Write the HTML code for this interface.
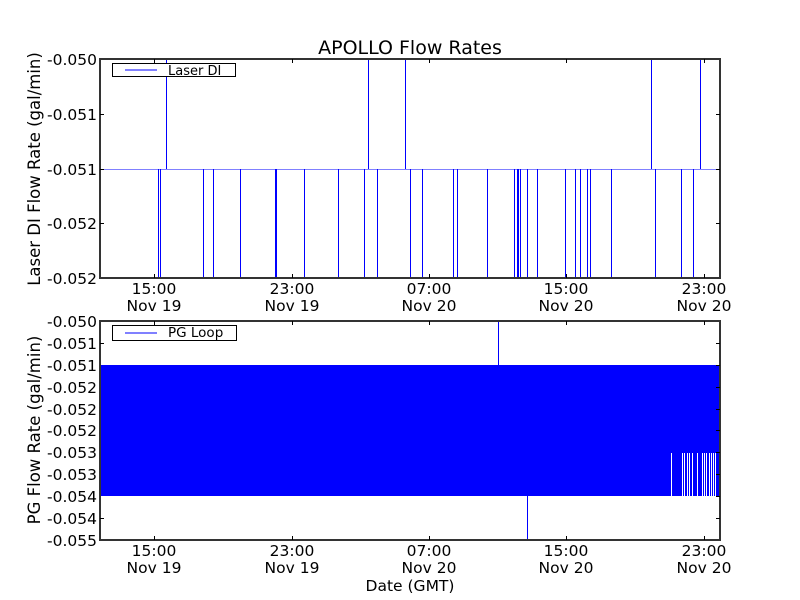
<!DOCTYPE html>
<html><head><style>body{margin:0;background:#fff}svg{display:block}text{font-family:"DejaVu Sans","Liberation Sans",sans-serif;font-size:15.5px;fill:#000}</style></head><body>
<svg width="800" height="600" viewBox="0 0 800 600" xmlns="http://www.w3.org/2000/svg">
<rect width="800" height="600" fill="#fff"/>
<text x="410" y="54" text-anchor="middle" style="font-size:19px">APOLLO Flow Rates</text>
<g stroke="#0000ff" stroke-width="1" fill="none">
<line x1="100" y1="169.5" x2="720" y2="169.5" stroke="#8080ff"/>
<path d="M158.5 169V278M160.5 169V278M203.5 169V278M213.5 169V278M240.5 169V278M275.5 169V278M276.5 169V278M304.5 169V278M338.5 169V278M364.5 169V278M377.5 169V278M410.5 169V278M422.5 169V278M453.5 169V278M457.5 169V278M487.5 169V278M514.5 169V278M517.5 169V278M518.5 169V278M520.5 169V278M527.5 169V278M537.5 169V278M565.5 169V278M575.5 169V278M580.5 169V278M587.5 169V278M590.5 169V278M611.5 169V278M655.5 169V278M681.5 169V278M693.5 169V278"/>
<path d="M166.5 59V169M368.5 59V169M405.5 59V169M651.5 59V169M700.5 59V169"/>
</g>
<rect x="100" y="59" width="620" height="219" fill="none" stroke="#333" stroke-width="2"/>
<g stroke="#000" stroke-width="1">
<path d="M154.5 59v4M154.5 278v-4M292.5 59v4M292.5 278v-4M429.5 59v4M429.5 278v-4M566.5 59v4M566.5 278v-4M704.5 59v4M704.5 278v-4"/>
<path d="M100 114.5h4M716 114.5h4M100 169.5h4M716 169.5h4M100 223.5h4M716 223.5h4"/>
</g>
<rect x="112.5" y="63.5" width="123" height="13" fill="#fff" stroke="#000"/>
<line x1="125" y1="70" x2="157" y2="70" stroke="#0000ff"/>
<text x="168" y="75" style="font-size:13px">Laser DI</text>
<g text-anchor="end">
<text x="97" y="65">-0.050</text><text x="97" y="120">-0.051</text><text x="97" y="175">-0.051</text><text x="97" y="229">-0.052</text><text x="97" y="284">-0.052</text>
</g>
<g text-anchor="middle">
<text x="154" y="294">15:00</text><text x="154" y="311">Nov 19</text>
<text x="292" y="294">23:00</text><text x="292" y="311">Nov 19</text>
<text x="429" y="294">07:00</text><text x="429" y="311">Nov 20</text>
<text x="566" y="294">15:00</text><text x="566" y="311">Nov 20</text>
<text x="704" y="294">23:00</text><text x="704" y="311">Nov 20</text>
</g>
<text transform="translate(40,169) rotate(-90)" text-anchor="middle" style="font-size:16.5px">Laser DI Flow Rate (gal/min)</text>
<rect x="100" y="365" width="620" height="131" fill="#0000ff"/>
<g stroke="#fff" stroke-width="1">
<path d="M671.5 453V496M682.5 453V496M684.5 453V496M687.5 453V496M689.5 453V496M692.5 453V496M697.5 453V496M702.5 453V496M704.5 453V496M706.5 453V496M709.5 453V496M711.5 453V496M713.5 453V496M715.5 453V496"/>
</g>
<line x1="498.5" y1="321" x2="498.5" y2="365" stroke="#0000ff"/>
<line x1="527.5" y1="496" x2="527.5" y2="540" stroke="#0000ff"/>
<rect x="100" y="321" width="620" height="219" fill="none" stroke="#333" stroke-width="2"/>
<g stroke="#000" stroke-width="1">
<path d="M154.5 321v4M154.5 540v-4M292.5 321v4M292.5 540v-4M429.5 321v4M429.5 540v-4M566.5 321v4M566.5 540v-4M704.5 321v4M704.5 540v-4"/>
<path d="M716 343.5h4M716 365.5h4M716 387.5h4M716 409.5h4M716 430.5h4M716 452.5h4M716 474.5h4M716 496.5h4M716 518.5h4M100 343.5h4M100 518.5h4"/>
</g>
<rect x="112.5" y="325.5" width="124" height="15" fill="#fff" stroke="#000"/>
<line x1="125" y1="333" x2="157" y2="333" stroke="#0000ff"/>
<text x="168" y="337" style="font-size:13.5px">PG Loop</text>
<g text-anchor="end">
<text x="97" y="327">-0.050</text><text x="97" y="349">-0.051</text><text x="97" y="371">-0.051</text><text x="97" y="393">-0.052</text><text x="97" y="415">-0.052</text><text x="97" y="436">-0.052</text><text x="97" y="458">-0.053</text><text x="97" y="480">-0.053</text><text x="97" y="502">-0.054</text><text x="97" y="524">-0.054</text><text x="97" y="546">-0.055</text>
</g>
<g text-anchor="middle">
<text x="154" y="556">15:00</text><text x="154" y="573">Nov 19</text>
<text x="292" y="556">23:00</text><text x="292" y="573">Nov 19</text>
<text x="429" y="556">07:00</text><text x="429" y="573">Nov 20</text>
<text x="566" y="556">15:00</text><text x="566" y="573">Nov 20</text>
<text x="704" y="556">23:00</text><text x="704" y="573">Nov 20</text>
<text x="410" y="591">Date (GMT)</text>
</g>
<text transform="translate(40,430) rotate(-90)" text-anchor="middle" style="font-size:16.5px">PG Flow Rate (gal/min)</text>
</svg>
</body></html>
